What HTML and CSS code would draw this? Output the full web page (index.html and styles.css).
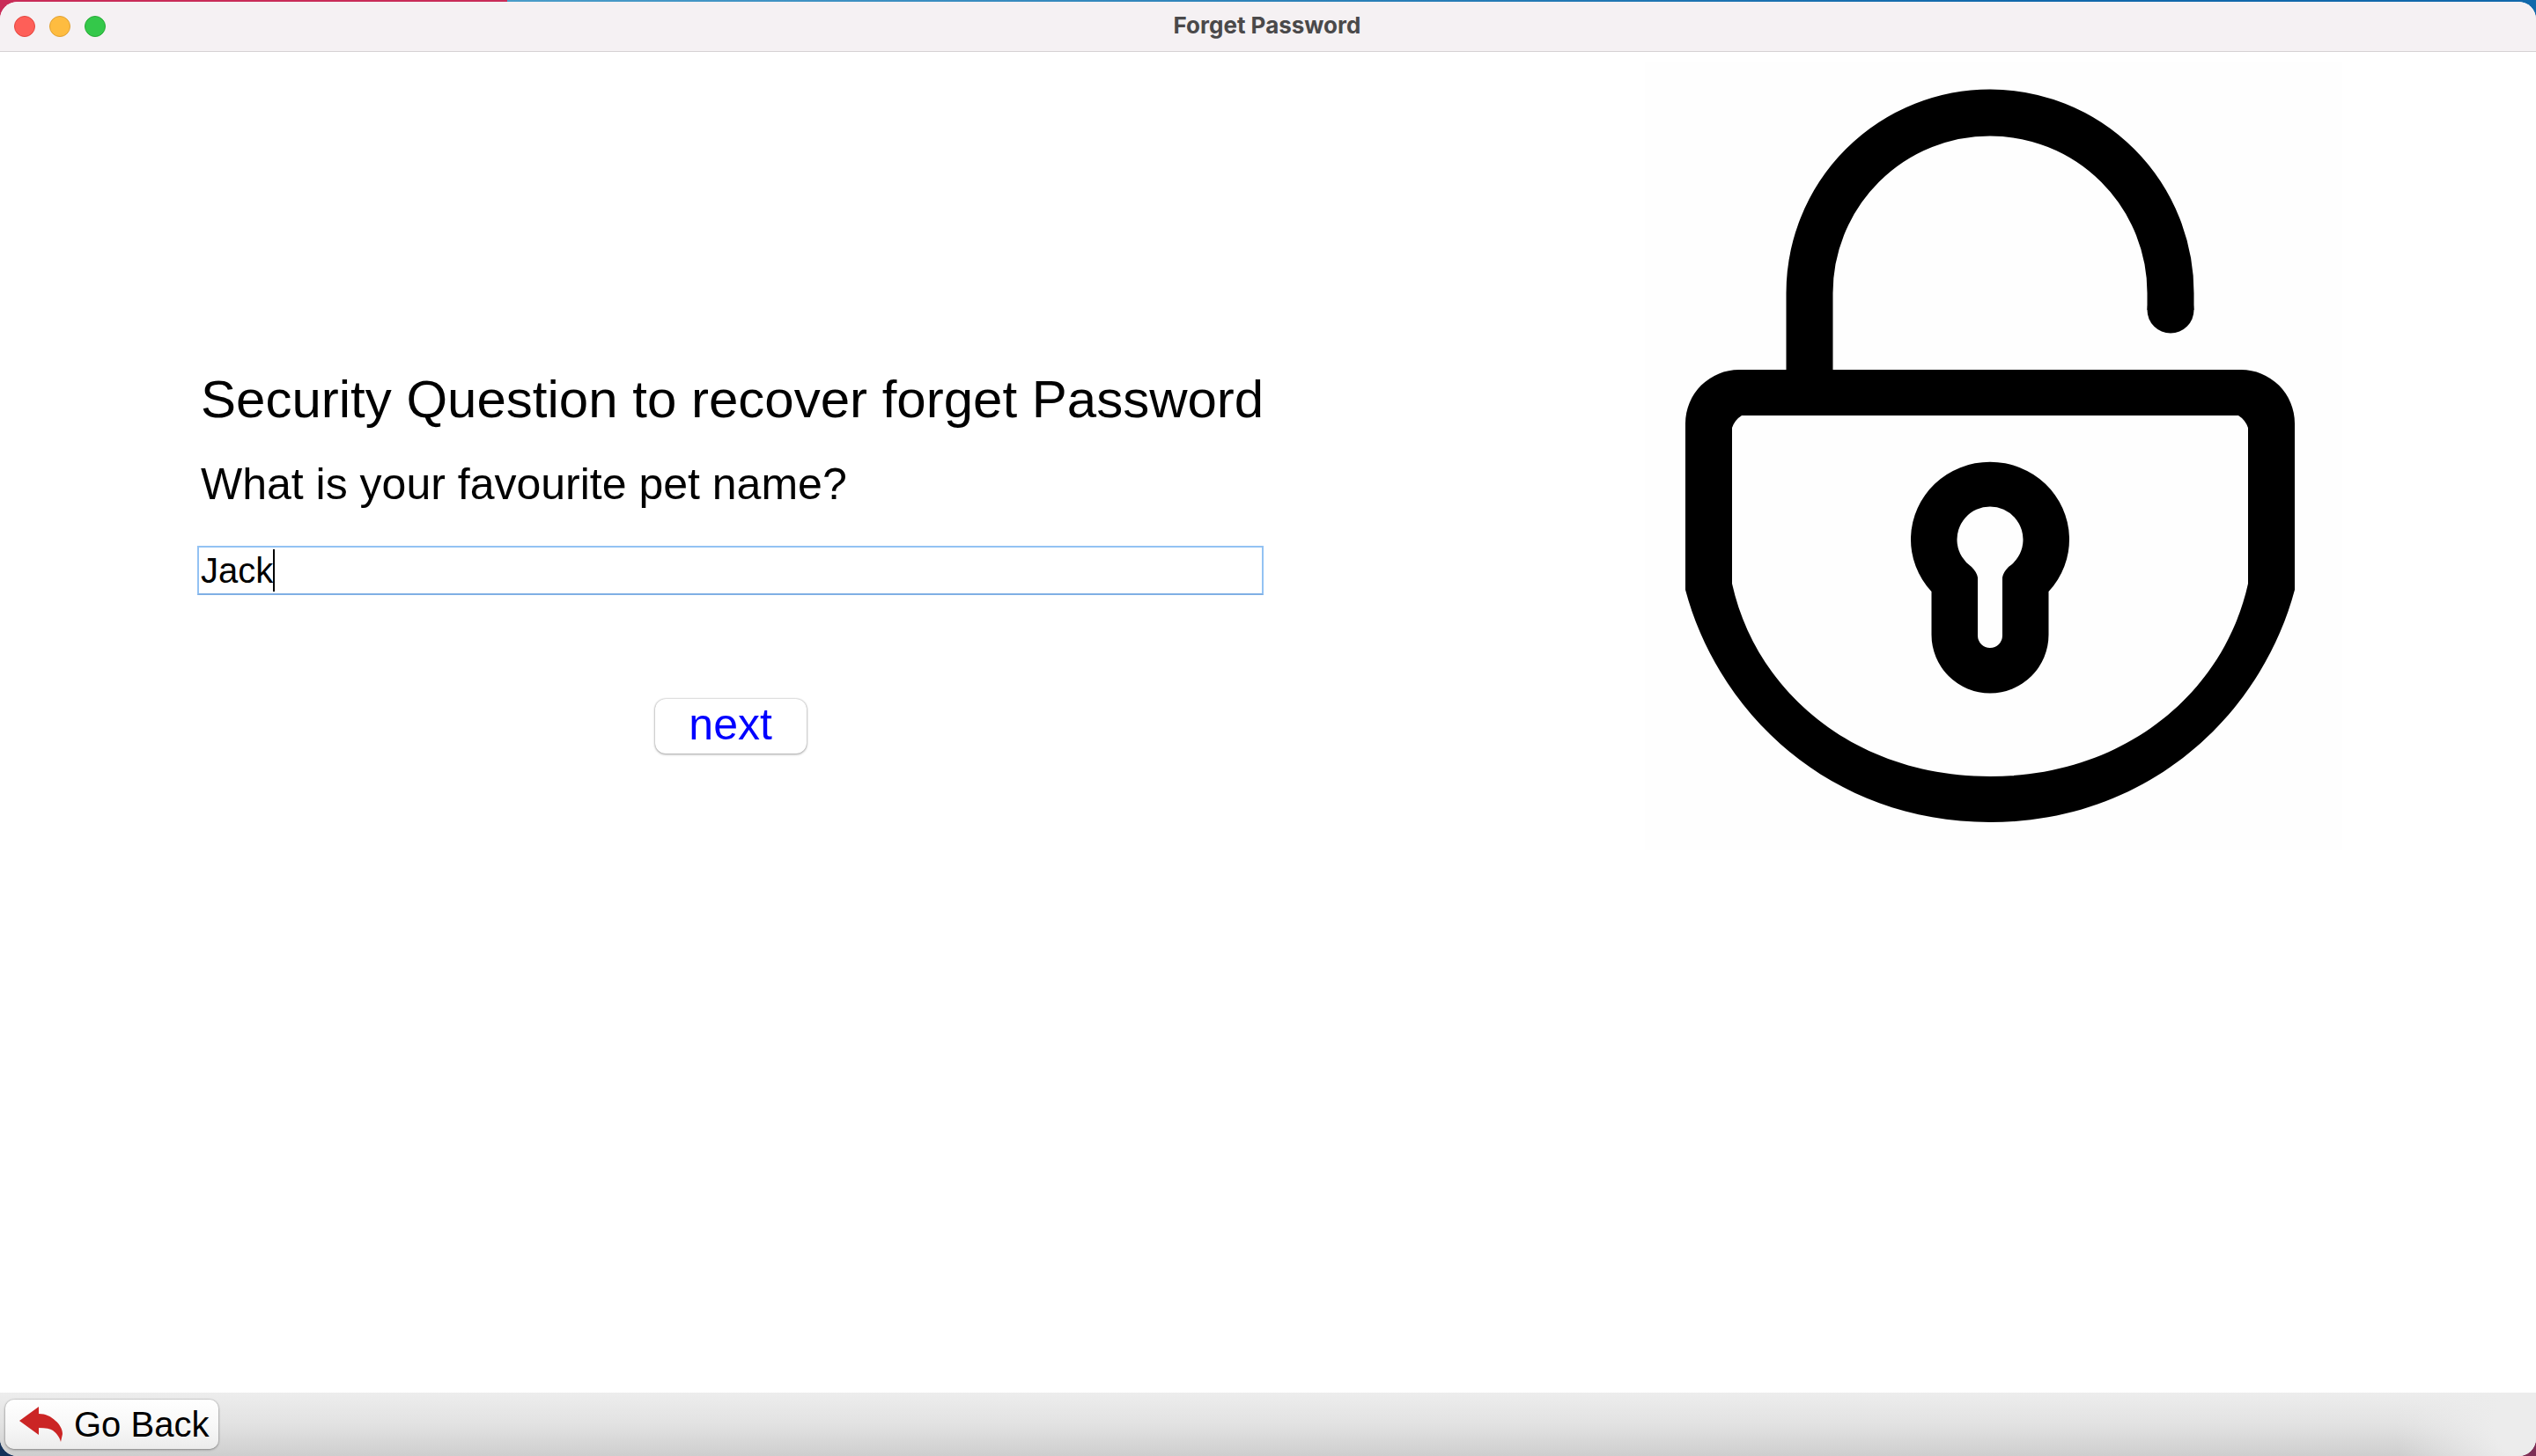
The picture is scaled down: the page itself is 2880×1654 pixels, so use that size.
FILE: index.html
```html
<!DOCTYPE html>
<html lang="en">
<head>
<meta charset="utf-8">
<meta name="viewport" content="width=device-width, initial-scale=1">
<title>Forget Password</title>
<link rel="stylesheet" href="styles.css">
</head>
<body>
<div class="window">
  <header class="titlebar">
    <div class="lights">
      <button class="light light-close" type="button" aria-label="Close"></button>
      <button class="light light-minimize" type="button" aria-label="Minimize"></button>
      <button class="light light-zoom" type="button" aria-label="Zoom"></button>
    </div>
    <div class="title">Forget Password</div>
  </header>
  <main class="content">
    <form class="recovery">
      <h1 class="heading">Security Question to recover forget Password</h1>
      <label class="question" for="answer">What is your favourite pet name?</label>
      <div class="field">
        <input class="answer" id="answer" type="text" value="Jack" autocomplete="off">
        <span class="caret"></span>
      </div>
      <button class="button next" type="button">next</button>
    </form>
    <svg class="lock" viewBox="1868 70 792 896" aria-hidden="true">
      <g fill="none" stroke="#000" stroke-width="53">
        <path d="M2055 440V333A205 205 0 0 1 2465 333V352"/>
      </g>
      <circle cx="2465" cy="352" r="26.5"/>
      <path fill-rule="evenodd" d="M1975 420H2545A61 61 0 0 1 2606 481V670C2568 812 2440 934 2260 934S1952 812 1914 670V481A61 61 0 0 1 1975 420ZM1978 472Q1970 477 1967 486V663C1994 785 2105 882 2260 882S2526 785 2553 663V486Q2550 477 2542 472Z"/>
      <path fill-rule="evenodd" d="M2193.500 672A90 88 0 1 1 2326.500 672V721A66.500 66.500 0 0 1 2193.500 721ZM2246 656Q2245 650 2239 644A37.500 37.500 0 1 1 2281 644Q2275 650 2274 656V722A14 14 0 0 1 2246 722Z"/>
    </svg>
  </main>
  <footer class="toolbar">
    <button class="button back" type="button">
      <svg class="arrow" viewBox="0 0 50 40" aria-hidden="true">
        <path fill="#cb2525" d="M0 16L22 0V8C30 8 36 11 41 16C46 20 49 26 49 31L47 40C46 35 42 30 38 27Q34 24 22 24V32Z"/>
      </svg>
      Go Back
    </button>
  </footer>
</div>
</body>
</html>
```
FILE: styles.css
```css
* {
  box-sizing: border-box;
}

body {
  margin: 0;
  min-height: 100vh;
  display: flex;
  flex-direction: column;
  padding-top: 2px;
  font-family: "Liberation Sans", Arial, sans-serif;
  font-kerning: none;
  color: #000;
  background:
    linear-gradient(90deg, #c92c58 20%, #4a9cc8 20%, #1169ab 80%) top / 100% 50% no-repeat,
    linear-gradient(90deg, #14315a 50%, #7e2f56 50%) bottom / 100% 50% no-repeat;
}

.window {
  flex: 1;
  display: flex;
  flex-direction: column;
  overflow: hidden;
  border-radius: 20px;
  background: #fff;
}

.titlebar {
  display: grid;
  grid-template-columns: 1fr auto 1fr;
  align-items: center;
  height: 57px;
  padding: 0 18px 0 16px;
  border-bottom: 1px solid #d6d2d4;
  background: #f5f1f3;
}

.lights {
  display: flex;
  gap: 16px;
}

.light {
  width: 24px;
  height: 24px;
  padding: 0;
  border: 1px solid;
  border-radius: 50%;
}

.light-close {
  background: #fe5f58;
  border-color: #e2463f;
}

.light-minimize {
  background: #febc40;
  border-color: #dfa033;
}

.light-zoom {
  background: #34c84a;
  border-color: #27aa35;
}

.title {
  padding-bottom: 2px;
  font: 700 26px/32px Inter, sans-serif;
  color: #4a494a;
}

.content {
  flex: 1;
  display: flex;
  justify-content: space-between;
  align-items: flex-start;
  padding: 11px 220px 0 224px;
}

.recovery {
  flex: 0 1 1208px;
  display: flex;
  flex-direction: column;
  padding-top: 348px;
}

.heading {
  margin: 0;
  padding-left: 4px;
  font-size: 60px;
  font-weight: 400;
  line-height: 72px;
  white-space: nowrap;
}

.question {
  margin-top: 30px;
  padding-left: 4px;
  font-size: 50px;
  line-height: 60px;
}

.field {
  position: relative;
  display: flex;
  margin-top: 40px;
}

.answer {
  flex: 1;
  height: 56px;
  padding: 0 2px;
  border: 2px solid #93c2f3;
  border-bottom-color: #7fafe4;
  outline: 0;
  font: inherit;
  font-size: 40px;
  background: #fff;
}

.caret {
  position: absolute;
  left: 86px;
  top: 4px;
  width: 2px;
  height: 48px;
  background: #000;
}

.button {
  border: 0;
  font: inherit;
  box-shadow: 0 0 2px #00000050, 0 1px 3px #00000050;
  cursor: pointer;
}

.next {
  align-self: center;
  width: 172px;
  height: 62px;
  margin-top: 118px;
  padding: 0 0 4px;
  border-radius: 12px;
  font-size: 50px;
  line-height: 58px;
  color: #00f;
  background: #fff;
}

.lock {
  flex: 0 1 792px;
  height: 896px;
  background: #fefefe;
}

.toolbar {
  display: flex;
  height: 72px;
  padding: 8px 6px;
  background:
    radial-gradient(160px 140px at 100% 50%, #ececec 30%, #ececec00),
    linear-gradient(#ededed, #e2e2e2 50%, #cecece);
}

.back {
  display: flex;
  align-items: center;
  gap: 12px;
  padding: 0 11px 0 16px;
  border-radius: 10px;
  font-size: 40px;
  line-height: 48px;
  background: linear-gradient(#fff, #f8f8f8 50%, #ececec);
}

.arrow {
  width: 50px;
  height: 40px;
}
```
